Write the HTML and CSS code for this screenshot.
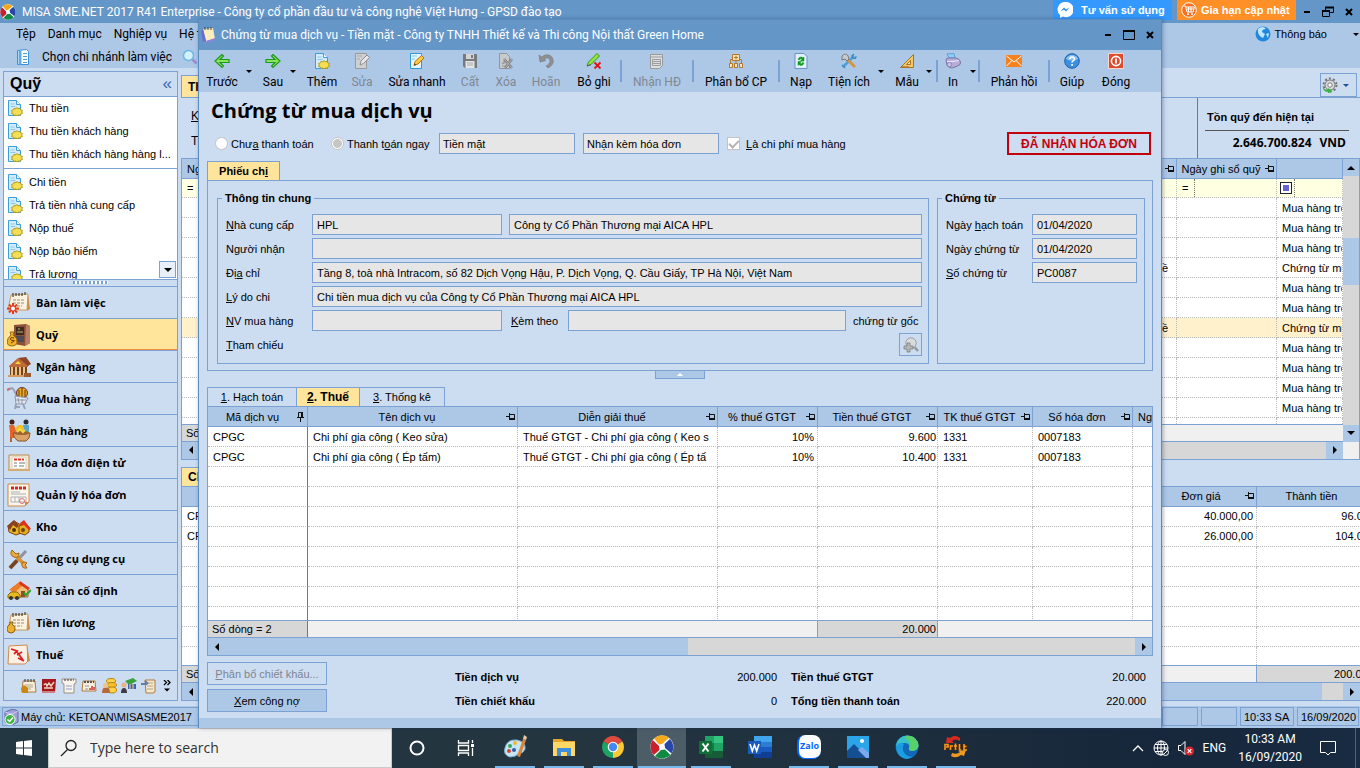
FILE: index.html
```html
<!DOCTYPE html>
<html lang="vi">
<head>
<meta charset="utf-8">
<title>MISA SME.NET 2017</title>
<link rel="stylesheet" href="styles.css">
</head>
<body>
<svg class="defs" aria-hidden="true">
  <symbol id="misa" viewBox="0 0 24 24"><circle cx="12" cy="12" r="11.500" fill="#fff"/><path d="M4 3.500A11.500 11.500 0 0 1 19 2.800L12 9 9 9.500z" fill="#f5a81c"/><path d="M20 4A11.500 11.500 0 0 1 21.500 18.500L15 13 14.500 9z" fill="#2747a8"/><path d="M20.500 20A11.500 11.500 0 0 1 5 21L11 15l4-.5z" fill="#108a43"/><path d="M3.800 20A11.500 11.500 0 0 1 2.800 5L9 11l.5 4z" fill="#c8202c"/></symbol>
  <symbol id="pagenew" viewBox="0 0 16 16"><path d="M1.500.5h8l4 4v11h-12z" fill="#d3ebfb" stroke="#3a9fdc"/><path d="M9.500.5v4h4" fill="#fff" stroke="#3a9fdc"/><path d="M3.500 4h4M3.500 6.500h5" stroke="#8cc8ec"/><path d="M10 7.500l1 1.300 2-.5.5 1.500 2 .7-.8 1.500.8 1.500-2 .6-.5 1.300-2-.4-1 1-1-1-2 .4-.5-1.300-2-.6.8-1.500-.8-1.500 2-.7.5-1.500 2 .5z" fill="#f4df52" stroke="#b39c20"/></symbol>
  <symbol id="left" viewBox="0 0 16 16"><path d="M8 1.500L1 8l7 6.500 1.500-1.500-3.500-3.500h9v-3H6L9.500 3z" fill="#8ee35c" stroke="#1c9a1c" stroke-width="1.200"/></symbol>
  <symbol id="right" viewBox="0 0 16 16"><path d="M8 1.500L15 8l-7 6.500L6.500 13 10 9.500H1v-3h9L6.500 3z" fill="#8ee35c" stroke="#1c9a1c" stroke-width="1.200"/></symbol>
  <symbol id="editgray" viewBox="0 0 16 16"><path d="M1.500.5h11v15h-11z" fill="#cfd0d2" stroke="#97999c"/><path d="M3 3h5M3 6h3" stroke="#aaa"/><path d="M6 12l1-4 6-6 2.500 2.500-6 6z" fill="#e7e7e7" stroke="#8d8f92"/></symbol>
  <symbol id="edit" viewBox="0 0 16 16"><path d="M1.500.5h11v15h-11z" fill="#e7f6ff" stroke="#2f97d8"/><path d="M3 3h5M3 6h3" stroke="#7fc3ec"/><path d="M5 12.500l1-4 6.500-6L15 5l-6 6z" fill="#ffc93f" stroke="#b8741d"/><path d="M5 12.500l.6-2 1.500 1.300z" fill="#333"/></symbol>
  <symbol id="save" viewBox="0 0 16 16"><path d="M1 1h14v14H3l-2-2z" fill="#77797c"/><path d="M4 1h8v5H4z" fill="#d4d5d6"/><path d="M9 2h2v3H9z" fill="#77797c"/><path d="M3.500 8h9v7h-9z" fill="#e3e4e5"/><path d="M5 10h6M5 12h6" stroke="#aaa"/></symbol>
  <symbol id="delgray" viewBox="0 0 16 16"><path d="M1.500.5h7l3 3v12h-10z" fill="#c9cacc" stroke="#939598"/><path d="M4 11l3-4 2 2zM4 13h4" stroke="#999" fill="#aaa"/><path d="M6 6l8 9M14 6l-7 9" stroke="#808285" stroke-width="2.500"/><path d="M6 6l8 9M14 6l-7 9" stroke="#bbb" stroke-width=".8"/></symbol>
  <symbol id="undo" viewBox="0 0 16 16"><path d="M1 2l1 7 6-1.500L6 6c3-2 6-1 6 2 0 2-2 4-4 5l2 2c4-2 6-5 5-8.500C14 1.500 8 0 3.800 4z" fill="#8d8f93" stroke="#77797c" stroke-width=".6"/></symbol>
  <symbol id="unpost" viewBox="0 0 16 16"><path d="M1 13l1.500-4 8.500-8.500 2.500 2.500-8.500 8.500z" fill="#8ee33e" stroke="#3f9a18"/><path d="M1 13l4-1.500" stroke="#555"/><path d="M8.500 9.500l6 6M14.500 9.500l-6 6" stroke="#e01515" stroke-width="1.800"/></symbol>
  <symbol id="formgray" viewBox="0 0 16 16"><path d="M1.500 1.500h12v11l-3 3h-9z" fill="#dedede" stroke="#999"/><path d="M1.500 4h12M3.500 6.500h8v6h-8zM3.500 8.500h8M3.500 10.500h8" stroke="#9a9c9f" fill="none"/></symbol>
  <symbol id="org" viewBox="0 0 16 16"><g fill="#fbe5b8" stroke="#b5792b"><path d="M4.500 1.500h7v6h-7z"/><path d="M1.500 10.500h3v4h-3zM6.500 10.500h3v4h-3zM11.500 10.500h3v4h-3z"/><path d="M8 2.500v4M6 4.500h4M8 7.500v3M2.500 10.500V6.500h2M13.500 10.500V6.500h-2" fill="none"/></g></symbol>
  <symbol id="reload" viewBox="0 0 16 16"><path d="M2 .5h9l3 3v12H2z" fill="#e1f1fd" stroke="#6b8fca"/><path d="M5 6.500c1-3 4-3 5-1.500l1-1v4H7.500L9 6.500C8 5.500 7 5.500 6.500 7zM11 10c-1 3-4 3-5 1.500l-1 1v-4h3.500L7 10c1 1 2 1 2.500-.5z" fill="#0f9a1a" stroke="#0f9a1a" stroke-width=".5"/></symbol>
  <symbol id="tools" viewBox="0 0 16 16"><path d="M2 14L13 3" stroke="#4ba0d8" stroke-width="2.500"/><path d="M13 1l-2 2 1 2 2 .5L15.500 3.500M1 12l3 3" stroke="#3d8cc4" stroke-width="1.500" fill="none"/><path d="M6 6l8 8" stroke="#d5943f" stroke-width="3"/><path d="M1 4c0-3 5-4 6-1l1 3-2 2-2-2-3 1z" fill="#c6cace" stroke="#666" stroke-width=".8"/></symbol>
  <symbol id="square" viewBox="0 0 16 16"><path d="M1.500 14.500l13-13v13z" fill="#f5c566" stroke="#a9761d"/><path d="M7.500 11.500l4-4v4z" fill="#cfdff3" stroke="#a9761d"/><path d="M3 14v-1M5 14v-1M7 14v-1M9 14v-1" stroke="#8a5b10"/></symbol>
  <symbol id="printer" viewBox="0 0 16 16"><path d="M4 5l-2-4 7-.5L10 5z" fill="#8fd0f8" stroke="#5b9fd5"/><path d="M1 7q0-2 3-2h7q4 1 4.500 4t-3 4L7 15q-3 0-5-2.500z" fill="#b6aed9" stroke="#7a74a9"/><path d="M2 8.500h6l6-1" stroke="#efeaff" fill="none"/><circle cx="4.500" cy="11.500" r="2.200" fill="#c9c3e6" stroke="#8c86bb"/></symbol>
  <symbol id="mail" viewBox="0 0 16 16"><path d="M0 2h16v12H0z" fill="#f58220"/><path d="M.5 3L8 9l7.500-6M.5 13L6 7.500M15.500 13L10 7.500" stroke="#fff" fill="none"/></symbol>
  <symbol id="help" viewBox="0 0 16 16"><circle cx="8" cy="8" r="7.300" fill="#3d8fe0" stroke="#1f5fa8"/><path d="M2 6a6.500 6.500 0 0 1 12 0q-6 3-12 0" fill="#8cc2f3"/><path d="M5.700 6.200q.2-2.300 2.400-2.300t2.300 2q0 1.200-1.200 1.900T8 9.500" stroke="#fff" stroke-width="1.500" fill="none"/><path d="M7.200 11h1.700v1.700H7.200z" fill="#fff"/></symbol>
  <symbol id="power" viewBox="0 0 16 16"><path d="M.5.500h15v15H.5z" fill="#dd4a2c" stroke="#f9d7cf"/><circle cx="8" cy="8" r="4.600" fill="none" stroke="#fff" stroke-width="1.600"/><path d="M8 5.500v5" stroke="#fff" stroke-width="1.800"/></symbol>
  <symbol id="zoomplus" viewBox="0 0 16 16"><circle cx="8" cy="6" r="5.200" fill="#d9dadb" stroke="#a0a2a5"/><path d="M11.500 10l3.500 4" stroke="#97999c" stroke-width="2.500"/><path d="M4 6h3v3h3v3H7v3H4v-3H1V9h3z" fill="#b3b5b7" stroke="#7f8184" stroke-width=".8"/></symbol>
  <symbol id="pin" viewBox="0 0 10 8"><path d="M0 3.500h3M3.500 0v7M4 1.500h4.500v4M4 5.500h5M4 6.500h5" fill="none" stroke="#111"/></symbol>
  <symbol id="pinv" viewBox="0 0 8 10"><path d="M3.500 6v4M0 5.500h7M1.500 5V.5h4M5.500 0v5M4.500 0v5" fill="none" stroke="#111"/></symbol>
  <symbol id="note" viewBox="0 0 24 24"><path d="M4 4l17-1-1 16H1z" fill="#fbf3df" stroke="#c69a60"/><path d="M21 3l2 15-3 2z" fill="#c98f4e"/><path d="M6 2v4M9 2v3M12 2v3M15 2v3M18 1v3" stroke="#444" stroke-width="1.200"/><path d="M6 9h11M6 12h11M6 15h9" stroke="#989188" stroke-width="1.200" stroke-dasharray="3 1"/></symbol>
  <symbol id="doccal" viewBox="0 0 16 16"><path d="M2 3h12l1 11H1z" fill="#f6eedd" stroke="#b07a3c"/><path d="M4 1v3M7 1v3M10 1v3M13 1v3" stroke="#333"/><path d="M4 7h8M4 9h8M4 11h6" stroke="#b5a583"/></symbol>
</svg>

<div class="app">
  <header class="titlebar">
    <svg class="i16"><use href="#misa"/></svg>
    <h1 class="apptitle">MISA SME.NET 2017 R41 Enterprise - Công ty cổ phần đầu tư và công nghệ Việt Hưng - GPSD đào tạo</h1>
    <button class="promo blue"><svg class="i16" viewBox="0 0 16 16"><path d="M8 0a7.500 7.500 0 0 0-5 13v3l3-1.500A7.600 7.600 0 1 0 8 0z" fill="#fff"/><path d="M3.500 9.500l3.500-4 2 2 3.500-2-3.500 4-2-2z" fill="#1e88f5"/></svg>Tư vấn sử dụng</button>
    <button class="promo orange"><svg class="i16" viewBox="0 0 16 16"><circle cx="8" cy="8" r="7.300" fill="#f7701f" stroke="#fff"/><path d="M2.500 4h2l1.500 6h6l1.500-5H5M6 7h7M7.500 5v5M10 5v5" stroke="#fff" fill="none"/><circle cx="7" cy="12" r="1" fill="#fff"/><circle cx="11" cy="12" r="1" fill="#fff"/></svg>Gia hạn cập nhật</button>
    <div class="winctl main">
      <button aria-label="Thu nhỏ"><svg viewBox="0 0 12 12"><path d="M3 6h6" stroke="#000" stroke-width="2"/></svg></button>
      <button aria-label="Khôi phục"><svg viewBox="0 0 12 12"><path d="M3.500 4V1.500h8v5H8M.5 4.500h7v6h-7z" fill="none" stroke="#000"/><path d="M3 1.500h9M0 5h8" stroke="#000" stroke-width="2"/></svg></button>
      <button aria-label="Đóng ứng dụng"><svg viewBox="0 0 12 12"><path d="M3 3l6 6M9 3l-6 6" stroke="#000" stroke-width="2"/></svg></button>
    </div>
  </header>
  <div class="menus">
    <nav class="menubar"><a href="#tep">Tệp</a><a href="#danhmuc">Danh mục</a><a href="#nghiepvu">Nghiệp vụ</a><a href="#hethong">Hệ t</a></nav>
    <div class="branch"><svg class="i16" viewBox="0 0 16 16"><path d="M1.500 1.500l9-1 2 2v13h-11z" fill="#fff" stroke="#3a93d6"/><path d="M2.500 1.500h3v14h-3z" fill="#59aee8"/><path d="M7 4.500h4M7 7.500h4M7 10.500h4M7 13.500h4" stroke="#4a9cd8"/></svg><button>Chọn chi nhánh làm việc</button><svg class="i16" viewBox="0 0 16 16"><circle cx="6.500" cy="6.500" r="5" fill="#d4f1ff" stroke="#68b7e6" stroke-width="1.500"/><path d="M10.500 10.500l4 4" stroke="#9a8fd0" stroke-width="3"/></svg></div>
    <button class="notice"><svg class="i16" viewBox="0 0 16 16"><circle cx="8" cy="8" r="7.500" fill="#2288de"/><path d="M3 3q5-4 8 0-4 0-4 3l3 2-2 4Q2 9 3 3zM11 8l3-1-1 5z" fill="#bfe6fb"/></svg>Thông báo</button>
    <span class="caret down"></span>
  </div>

  <div class="workspace">
    <aside class="sidebar">
      <div class="sidehead"><h2>Quỹ</h2><button aria-label="Thu gọn">«</button></div>
      <div class="links">
        <a href="#1"><svg class="i16"><use href="#pagenew"/></svg>Thu tiền</a>
        <a href="#2"><svg class="i16"><use href="#pagenew"/></svg>Thu tiền khách hàng</a>
        <a href="#3"><svg class="i16"><use href="#pagenew"/></svg>Thu tiền khách hàng hàng l...</a>
        <hr>
        <a href="#4"><svg class="i16"><use href="#pagenew"/></svg>Chi tiền</a>
        <a href="#5"><svg class="i16"><use href="#pagenew"/></svg>Trả tiền nhà cung cấp</a>
        <a href="#6"><svg class="i16"><use href="#pagenew"/></svg>Nộp thuế</a>
        <a href="#7"><svg class="i16"><use href="#pagenew"/></svg>Nộp bảo hiểm</a>
        <a href="#8"><svg class="i16"><use href="#pagenew"/></svg>Trả lương</a>
        <button class="more" aria-label="Cuộn xuống"><span class="caret down big"></span></button>
      </div>
      <div class="splitter"><span></span></div>
      <nav class="modules">
        <a href="#m1"><svg class="i24"><use href="#note"/><g stroke="#e23b1c" stroke-width="2"><path d="M6 12v11M0 17.500h12M2 13.500l8 8M10 13.500l-8 8"/></g><circle cx="6" cy="17.500" r="2" fill="#fff"/></svg>Bàn làm việc</a>
        <a href="#m2" class="on"><svg class="i24" viewBox="0 0 24 24"><path d="M7 2l12-1 4 2v17l-5 3-11-2z" fill="#8b5138"/><path d="M19 1l4 2v17l-5 3z" fill="#b98064"/><path d="M9 4h8v8H9z" fill="#3c2a25"/><path d="M9 13h8v6H9z" fill="#4f4a55"/><path d="M10 9h6M11 6h2" stroke="#c7b46a"/><path d="M3 9h4l-1 3q5 3 4 8-1 3-5 3t-5-3q0-5 4-8z" fill="#eeb128" stroke="#9c6a12"/><path d="M7 15q-4-1-3.500 1t3 1.500T4 20" stroke="#6d2f0c" fill="none"/></svg>Quỹ</a>
        <a href="#m3"><svg class="i24" viewBox="0 0 24 24"><path d="M2 11L11 3l10 7v2H2z" fill="#c06a34"/><path d="M11 3l8-1 5 7-3 2z" fill="#8e4525"/><path d="M3 12h17v8H3z" fill="#6f4125"/><path d="M5 12v8M9 12v8M13 12v8M17 12v8" stroke="#eec27d" stroke-width="2"/><path d="M1 20h20v2H1z" fill="#d89a5c"/><path d="M8 9l3-3 3 3z" fill="#f6d443"/><path d="M17 18h7v4h-7z" fill="#9d5a2e"/></svg>Ngân hàng</a>
        <a href="#m4"><svg class="i24" viewBox="0 0 24 24"><path d="M0 3l5-2 2 2 3 7" stroke="#9aa4b8" stroke-width="2" fill="none"/><path d="M0 3l3-1.500" stroke="#d07060" stroke-width="2"/><circle cx="15" cy="6" r="5.500" fill="#f2ab1f" stroke="#633"/><path d="M12 3v7M15 1v10M18 3v7" stroke="#5b3a12"/><path d="M8 9l13 2-3 6H9z" fill="#e3e7ef" stroke="#8d97ac"/><path d="M11 11l1 5M15 12v5M9 13h10" stroke="#8d97ac"/><path d="M9 17l-1 5M16 17l2 5M8 20h5" stroke="#98a3b8" stroke-width="2"/></svg>Mua hàng</a>
        <a href="#m5"><svg class="i24" viewBox="0 0 24 24"><circle cx="5" cy="3" r="2.500" fill="#432018"/><path d="M2 6h5l2 6-2 3v4H3V13z" fill="#e6642a"/><path d="M4 18v5" stroke="#b9632f" stroke-width="2"/><circle cx="19" cy="3" r="2.500" fill="#2b2b35"/><path d="M16 6h6v8h-6z" fill="#5aa6c8"/><circle cx="13" cy="10" r="4" fill="#edbf28"/><path d="M6 14h17q0 6-4 8h-8q-4-2-5-8z" fill="#dca368" stroke="#8c5527"/><ellipse cx="14.500" cy="14" rx="8" ry="2" fill="#9f6531"/><path d="M10 13l3-3 3 3 2-2" stroke="#f7d843" stroke-width="2" fill="none"/></svg>Bán hàng</a>
        <a href="#m6"><svg class="i24" viewBox="0 0 24 24"><path d="M2 4h20v15H2z" fill="#f4ead3" stroke="#b98c4e"/><path d="M5 6h14v12H5z" fill="#fff" stroke="#ddd0b3"/><path d="M7 8.500h10" stroke="#d32" stroke-width="2" stroke-dasharray="3 1"/><path d="M7 12h3M12 12h6M7 15h3M12 15h5" stroke="#777"/><path d="M1 18h22v2H1z" fill="#d5ab6f"/></svg>Hóa đơn điện tử</a>
        <a href="#m7"><svg class="i24" viewBox="0 0 24 24"><path d="M1 1h21v18l-4 4H1z" fill="#fdf6ea" stroke="#c98d49"/><path d="M4 5h15" stroke="#e02222" stroke-width="3" stroke-dasharray="3 1"/><path d="M4 9h9M4 11h15M4 14h15v5H4zM8 14v5M12 14v5" stroke="#aab0ba" fill="none"/><circle cx="15" cy="18" r="2.500" fill="none" stroke="#df6b7c"/><path d="M18 23v-4h4z" fill="#d38c45"/></svg>Quản lý hóa đơn</a>
        <a href="#m8"><svg class="i24" viewBox="0 0 24 24"><path d="M1 11l6-5 7 4v8l-5 2-7-3z" fill="#edb41f" stroke="#784211"/><path d="M0 11l7-6 5 5-2 3-4-3-3 5z" fill="#8a4220"/><path d="M12 11l6-3 4 4v5l-4 3-6-2z" fill="#e6ab25" stroke="#784211"/><path d="M13 8l4-3 7 9-2 1-5-5-3 1z" fill="#d9331c"/><circle cx="7" cy="15" r="2" fill="#52300e"/><circle cx="16" cy="15" r="2" fill="#704510"/></svg>Kho</a>
        <a href="#m9"><svg class="i24" viewBox="0 0 24 24"><path d="M3 21L19 4" stroke="#8d939e" stroke-width="3"/><path d="M3 21L10 13.500" stroke="#754422" stroke-width="4"/><path d="M7 7l11 11" stroke="#d9902f" stroke-width="3.500"/><path d="M5 3q-3 5 2 7t5-4L9 7 7 5zM15 16q-1 6 5 5l-2-3 2-2q-3-2-5 0z" fill="#efab3a" stroke="#9d641d"/></svg>Công cụ dụng cụ</a>
        <a href="#m10"><svg class="i24" viewBox="0 0 24 24"><path d="M5 9l8-5 8 5v9H7z" fill="#f1bd73" stroke="#a96527"/><path d="M2 11L12 3l4 3-8 7z" fill="#ee7c28"/><path d="M13 2l10 7-2 2-9-6z" fill="#d9371f"/><path d="M14 12h4v6h-4z" fill="#89512a"/><path d="M1 16l3-3h6l3 3v3H1z" fill="#e9ba1e" stroke="#8c680c"/><circle cx="4" cy="19" r="2" fill="#333"/><circle cx="10" cy="19" r="2" fill="#333"/><path d="M17 14l2 2 5-5" stroke="#2ba233" stroke-width="2" fill="none"/></svg>Tài sản cố định</a>
        <a href="#m11"><svg class="i24"><use href="#note"/><path d="M3 11h3l-1 2q4 3 3 6t-4 3-4-3 3-6z" fill="#eeb128" stroke="#8c5b0c"/></svg>Tiền lương</a>
        <a href="#m12"><svg class="i24" viewBox="0 0 24 24"><path d="M2 3l18-1 1 16-3 3H1z" fill="#fbf0e4" stroke="#d08a50"/><path d="M20 2l3 16-3 1z" fill="#c98f4e"/><path d="M4 6l6 2-3 3M10 9l6 8M15 9l-5 3M11 15l6 3" stroke="#d92323" stroke-width="1.800" fill="none"/></svg>Thuế</a>
      </nav>
      <div class="quick">
        <button aria-label="Giá thành"><svg class="i16"><use href="#doccal"/><path d="M0 10l3-3 4 3v5H1z" fill="#c98a15"/></svg></button>
        <button aria-label="Sổ"><svg class="i16" viewBox="0 0 16 16"><path d="M1 1h14l-1 14H1z" fill="#a5181d"/><path d="M3 7q2-3 3 1l2-3 2 3 3-4M3 10h9" stroke="#f1d6c4" fill="none" stroke-width="1.500"/><path d="M1 14h13" stroke="#eee"/></svg></button>
        <button aria-label="Hợp đồng"><svg class="i16" viewBox="0 0 16 16"><path d="M1 1h14v4l-2 1v9H3V6L1 5z" fill="#f8f4ec" stroke="#998f80"/><path d="M3 2h10" stroke="#333" stroke-dasharray="2 1"/><path d="M5 8h6M5 11h6" stroke="#8ea0c8"/></svg></button>
        <button aria-label="Ngân sách"><svg class="i16" viewBox="0 0 16 16"><path d="M2 3h12l1 10H1z" fill="#f6eedd" stroke="#b07a3c"/><path d="M3 4h10" stroke="#555" stroke-width="2" stroke-dasharray="2 1"/><path d="M4 8h4M4 11h3" stroke="#999"/><path d="M9 12v-2M11 12V8M13 12V9" stroke="#c33" stroke-width="1.500"/></svg></button>
        <button aria-label="Cổ đông"><svg class="i16" viewBox="0 0 16 16"><ellipse cx="10" cy="3" rx="4.500" ry="2.500" fill="#ffd348" stroke="#b98512"/><ellipse cx="11" cy="7" rx="4.500" ry="2.500" fill="#f6bd2d" stroke="#b98512"/><ellipse cx="11" cy="12" rx="4.500" ry="3" fill="#ffd348" stroke="#b98512"/><path d="M1 15q0-6 4-6t4 6z" fill="#b66a3a"/><circle cx="4.500" cy="7.500" r="2.500" fill="#eec28e"/></svg></button>
        <button aria-label="Thủ quỹ"><svg class="i16" viewBox="0 0 16 16"><path d="M4 3l8-3 4 3-8 4z" fill="#38a23c"/><path d="M7 6h8v5H7z" fill="#3c63b8"/><path d="M9 6v5M12 6v5" stroke="#ffe37a"/><path d="M0 15q0-5 3-5t3 5z" fill="#3d3d48"/><circle cx="3" cy="7" r="2.500" fill="#e7b284"/></svg></button>
        <button aria-label="Tổng hợp"><svg class="i16" viewBox="0 0 16 16"><path d="M4 2h10v12l-2 1H5z" fill="#f3e7cf" stroke="#b07a3c"/><path d="M6 5h6M6 8h6M6 11h6" stroke="#b5a583"/><path d="M0 6h6M4 3l3 3" stroke="#667aa8" stroke-width="2"/></svg></button>
        <button aria-label="Thêm phân hệ" class="chev"><svg viewBox="0 0 8 12"><path d="M1 0l2.500 2.500L1 5M4.500 0L7 2.500 4.500 5" stroke="#000" stroke-width="1.300" fill="none"/><path d="M1 8.500h6l-3 3z"/></svg></button>
      </div>
    </aside>

    <main class="content">
      <div class="tabline"><button class="tab on">Thu</button><span class="grow"></span><button class="gear" aria-label="Tùy chọn"><svg class="i16" viewBox="0 0 16 16"><circle cx="8" cy="8" r="5" fill="#d8dadc" stroke="#777" stroke-width="1"/><circle cx="8" cy="8" r="6.500" fill="none" stroke="#777" stroke-width="2" stroke-dasharray="2.100 2"/><circle cx="8" cy="8" r="2.200" fill="#fff" stroke="#777"/><path d="M1 8q0 5 5 5v-2l4 3-4 2.500V15Q0 15 1 8z" fill="#38b53c"/></svg><span class="caret down"></span></button></div>
      <div class="filters">
        <div class="crit"><p><u>K</u></p><p>T</p></div>
        <div class="balance"><p>Tồn quỹ đến hiện tại</p><p class="sum"><span>2.646.700.824</span><span>VND</span></p></div>
      </div>
      <section class="grid g1">
        <div class="gridmain">
          <div class="clip">
          <table>
            <colgroup><col><col class="w100"><col class="w66"></colgroup>
            <thead><tr><th><span class="th l">Ng<svg class="pin"><use href="#pin"/></svg></span></th><th><span class="th">Ngày ghi sổ quỹ<svg class="pin"><use href="#pin"/></svg></span></th><th></th></tr></thead>
            <tbody>
              <tr class="filter"><td>=</td><td>=<i></i></td><td><b class="chk"></b><i></i></td></tr>
              <tr><td></td><td></td><td>Mua hàng trong</td></tr>
              <tr><td></td><td></td><td>Mua hàng trong</td></tr>
              <tr><td></td><td></td><td>Mua hàng trong</td></tr>
              <tr><td class="r">ề</td><td></td><td>Chứng từ mua</td></tr>
              <tr><td></td><td></td><td>Mua hàng trong</td></tr>
              <tr><td></td><td></td><td>Mua hàng trong</td></tr>
              <tr class="sel"><td class="r">ề</td><td></td><td>Chứng từ mua</td></tr>
              <tr><td></td><td></td><td>Mua hàng trong</td></tr>
              <tr><td></td><td></td><td>Mua hàng trong</td></tr>
              <tr><td></td><td></td><td>Mua hàng trong</td></tr>
              <tr><td></td><td></td><td>Mua hàng trong</td></tr>
              <tr><td></td><td></td><td>Mua hàng trong</td></tr>
            </tbody>
          </table>
          </div>
          <div class="gfoot"><span class="count">Số</span></div>
          <div class="hscroll"><button aria-label="Cuộn trái"><span class="caret left"></span></button><span class="grow"></span><button aria-label="Cuộn phải"><span class="caret right"></span></button></div>
        </div>
        <div class="vscroll"><button aria-label="Cuộn lên"><span class="caret up big"></span></button><span class="t1"></span><span class="thumb"></span><span class="t2"></span><button aria-label="Cuộn xuống"><span class="caret down big"></span></button><span class="corner"></span></div>
      </section>
      <div class="tabline low"><button class="tab on">Chi</button></div>
      <section class="grid g2">
        <div class="gridmain">
          <div class="clip">
          <table class="over">
            <colgroup><col><col class="w100"><col class="w122"></colgroup>
            <thead><tr><th></th><th><span class="th">Đơn giá<svg class="pin"><use href="#pin"/></svg></span></th><th><span class="th wide">Thành tiền</span></th></tr></thead>
            <tbody>
              <tr><td>CP</td><td class="n">40.000,00</td><td class="n">96.000</td></tr>
              <tr><td>CP</td><td class="n">26.000,00</td><td class="n">104.000</td></tr>
              <tr><td></td><td></td><td></td></tr><tr><td></td><td></td><td></td></tr><tr><td></td><td></td><td></td></tr><tr><td></td><td></td><td></td></tr><tr><td></td><td></td><td></td></tr><tr><td></td><td></td><td></td></tr>
            </tbody>
          </table>
          </div>
          <div class="gfoot"><span class="count">Số</span><span class="total">200.000</span></div>
          <div class="hscroll"><button aria-label="Cuộn trái"><span class="caret left"></span></button><span class="bar"></span><span class="grow"></span><button aria-label="Cuộn phải"><span class="caret right"></span></button></div>
        </div>
      </section>
    </main>
  </div>
  <footer class="status"><span class="server"><svg class="i16" viewBox="0 0 16 16"><path d="M1 3l8-3 5 2v11l-6 3-7-3z" fill="#9da1d8" stroke="#6568a5"/><path d="M1 3l7 2v11M8 5l6-3" stroke="#c9cbf0" fill="none"/><circle cx="6" cy="10.500" r="5" fill="#3fb341" stroke="#fff"/><path d="M3.500 10.500l2 2 3.500-4" stroke="#fff" stroke-width="1.500" fill="none"/></svg>Máy chủ: KETOAN\MISASME2017</span><span class="s36"></span><span class="s36"></span><span class="s54">10:33 SA</span><span class="s62">16/09/2020</span></footer>

  <section class="dialog" role="dialog" aria-label="Chứng từ mua dịch vụ">
    <header class="dtitle">
      <svg class="i16" viewBox="0 0 16 16"><path d="M3 2l10-1 2 11-9 2z" fill="#fbeebc"/><path d="M1 4l2-2 3 12-3 1z" fill="#6d6bd0"/><path d="M3 15l12-4v2l-9 3z" fill="#8a87dd"/><path d="M5 0v3M8 0v3M11 0v3" stroke="#444"/></svg>
      <h2>Chứng từ mua dịch vụ - Tiền mặt - Công ty TNHH Thiết kế và Thi công Nội thất Green Home</h2>
      <div class="winctl">
        <button aria-label="Thu nhỏ hộp thoại"><svg viewBox="0 0 12 12"><path d="M3 6h6" stroke="#000" stroke-width="2"/></svg></button>
        <button aria-label="Phóng to"><svg viewBox="0 0 12 12"><path d="M.5 1.500h11v9H.5z" fill="none" stroke="#000"/><path d="M0 2h12" stroke="#000" stroke-width="2"/></svg></button>
        <button aria-label="Đóng hộp thoại"><svg viewBox="0 0 12 12"><path d="M3 3l6 6M9 3l-6 6" stroke="#000" stroke-width="2"/></svg></button>
      </div>
    </header>
    <div class="toolbar">
      <button><svg class="i16"><use href="#left"/></svg>Trước</button><span class="caret down"></span>
      <button><svg class="i16"><use href="#right"/></svg>Sau</button><span class="caret down"></span>
      <button><svg class="i16"><use href="#pagenew"/></svg>Thêm</button>
      <button disabled><svg class="i16"><use href="#editgray"/></svg>Sửa</button>
      <button><svg class="i16"><use href="#edit"/></svg>Sửa nhanh</button>
      <button disabled><svg class="i16"><use href="#save"/></svg>Cất</button>
      <button disabled><svg class="i16"><use href="#delgray"/></svg>Xóa</button>
      <button disabled><svg class="i16"><use href="#undo"/></svg>Hoãn</button>
      <button><svg class="i16"><use href="#unpost"/></svg>Bỏ ghi</button><span class="sep"></span>
      <button disabled><svg class="i16"><use href="#formgray"/></svg>Nhận HĐ</button><span class="sep"></span>
      <button><svg class="i16"><use href="#org"/></svg>Phân bổ CP</button><span class="sep"></span>
      <button><svg class="i16"><use href="#reload"/></svg>Nạp</button>
      <button><svg class="i16"><use href="#tools"/></svg>Tiện ích</button><span class="caret down"></span>
      <button><svg class="i16"><use href="#square"/></svg>Mẫu</button><span class="caret down"></span><span class="sep"></span>
      <button><svg class="i16"><use href="#printer"/></svg>In</button><span class="caret down"></span><span class="sep"></span>
      <button><svg class="i16"><use href="#mail"/></svg>Phản hồi</button><span class="sep"></span>
      <button><svg class="i16"><use href="#help"/></svg>Giúp</button>
      <button><svg class="i16"><use href="#power"/></svg>Đóng</button>
    </div>
    <div class="dbody">
      <h3>Chứng từ mua dịch vụ</h3>
      <div class="options">
        <label class="opt first"><input type="radio" name="pay"><span>Chư<u>a</u> thanh toán</span></label>
        <label class="opt second"><input type="radio" name="pay" checked><span>Thanh t<u>o</u>án ngay</span></label>
        <input class="field w136" aria-label="Hình thức" value="Tiền mặt" readonly>
        <input class="field w136" aria-label="Hóa đơn" value="Nhận kèm hóa đơn" readonly>
        <label class="opt"><input type="checkbox" checked><span><u>L</u>à chi phí mua hàng</span></label>
        <strong class="stamp">ĐÃ NHẬN HÓA ĐƠN</strong>
      </div>
      <div class="ptabs"><button class="ptab">Phiếu ch<u>i</u></button></div>
      <div class="panel">
        <fieldset class="general"><legend>Thông tin chung</legend>
          <div class="row"><label for="ncc"><u>N</u>hà cung cấp</label><input id="ncc" class="field w190" value="HPL" readonly><input class="field grow" aria-label="Tên nhà cung cấp" value="Công ty Cổ Phần Thương mại AICA HPL" readonly></div>
          <div class="row"><label for="nn">N<u>g</u>ười nhận</label><input id="nn" class="field grow" readonly></div>
          <div class="row"><label for="dc">Đị<u>a</u> chỉ</label><input id="dc" class="field grow" value="Tầng 8, toà nhà Intracom, số 82 Dịch Vọng Hậu, P. Dịch Vọng, Q. Cầu Giấy, TP Hà Nội, Việt Nam" readonly></div>
          <div class="row"><label for="ld"><u>L</u>ý do chi</label><input id="ld" class="field grow" value="Chi tiền mua dịch vụ của Công ty Cổ Phần Thương mại AICA HPL" readonly></div>
          <div class="row"><label for="nv"><u>N</u>V mua hàng</label><input id="nv" class="field w190" readonly><label class="kt" for="kt"><u>K</u>èm theo</label><input id="kt" class="field grow" readonly><span class="tail">chứng từ gốc</span></div>
          <div class="row"><label for="tc"><u>T</u>ham chiếu</label><span class="grow"></span><button id="tc" class="ref"><svg class="i16"><use href="#zoomplus"/></svg></button></div>
        </fieldset>
        <fieldset class="voucher"><legend>Chứng từ</legend>
          <div class="row"><label for="nh">Ngày <u>h</u>ạch toán</label><input id="nh" class="field grow" value="01/04/2020" readonly></div>
          <div class="row"><label for="nc">Ngày <u>c</u>hứng từ</label><input id="nc" class="field grow" value="01/04/2020" readonly></div>
          <div class="row"><label for="sc"><u>S</u>ố chứng từ</label><input id="sc" class="field grow" value="PC0087" readonly></div>
        </fieldset>
      </div>
      <button class="fold" aria-label="Thu gọn thông tin"><span class="caret up"></span></button>
      <div class="dtabs"><button class="dt1"><u>1</u>. Hạch toán</button><button class="dt2 on"><u>2</u>. Thuế</button><button class="dt3"><u>3</u>. Thống kê</button></div>
      <section class="grid lines">
        <div class="gridmain">
          <div class="clip">
          <table>
            <colgroup><col class="w100"><col class="w210"><col class="w200"><col class="w100"><col class="w120"><col class="w95"><col class="w100"><col></colgroup>
            <thead><tr><th><span class="th">Mã dịch vụ<svg class="pinv"><use href="#pinv"/></svg></span></th><th><span class="th">Tên dịch vụ<svg class="pin"><use href="#pin"/></svg></span></th><th><span class="th">Diễn giải thuế<svg class="pin"><use href="#pin"/></svg></span></th><th><span class="th">% thuế GTGT<svg class="pin"><use href="#pin"/></svg></span></th><th><span class="th">Tiền thuế GTGT<svg class="pin"><use href="#pin"/></svg></span></th><th><span class="th">TK thuế GTGT<svg class="pin"><use href="#pin"/></svg></span></th><th><span class="th">Số hóa đơn<svg class="pin"><use href="#pin"/></svg></span></th><th><span class="th l">Ng</span></th></tr></thead>
            <tbody>
              <tr><td>CPGC</td><td>Chi phí gia công ( Keo sửa)</td><td>Thuế GTGT - Chi phí gia công ( Keo s</td><td class="n">10%</td><td class="n t">9.600</td><td>1331</td><td>0007183</td><td></td></tr>
              <tr><td>CPGC</td><td>Chi phí gia công ( Ép tấm)</td><td>Thuế GTGT - Chi phí gia công ( Ép tấ</td><td class="n">10%</td><td class="n t">10.400</td><td>1331</td><td>0007183</td><td></td></tr>
              <tr><td></td><td></td><td></td><td></td><td></td><td></td><td></td><td></td></tr>
              <tr><td></td><td></td><td></td><td></td><td></td><td></td><td></td><td></td></tr>
              <tr><td></td><td></td><td></td><td></td><td></td><td></td><td></td><td></td></tr>
              <tr><td></td><td></td><td></td><td></td><td></td><td></td><td></td><td></td></tr>
              <tr><td></td><td></td><td></td><td></td><td></td><td></td><td></td><td></td></tr>
              <tr><td></td><td></td><td></td><td></td><td></td><td></td><td></td><td></td></tr>
              <tr><td></td><td></td><td></td><td></td><td></td><td></td><td></td><td></td></tr>
              <tr><td></td><td></td><td></td><td></td><td></td><td></td><td></td><td></td></tr>
            </tbody>
          </table>
          </div>
          <div class="gfoot"><span class="count">Số dòng = 2</span><span class="space"></span><span class="total">20.000</span></div>
          <div class="hscroll"><button aria-label="Cuộn trái"><span class="caret left"></span></button><span class="bar"></span><span class="grow"></span><button aria-label="Cuộn phải"><span class="caret right"></span></button></div>
        </div>
      </section>
      <div class="bottom">
        <div class="actions"><button disabled><u>P</u>hân bổ chiết khấu...</button><button><u>X</u>em công nợ</button></div>
        <dl class="totals">
          <div><dt>Tiền dịch vụ</dt><dd>200.000</dd></div><div><dt>Tiền thuế GTGT</dt><dd>20.000</dd></div>
          <div><dt>Tiền chiết khấu</dt><dd>0</dd></div><div><dt>Tổng tiền thanh toán</dt><dd>220.000</dd></div>
        </dl>
      </div>
    </div>
  </section>
</div>

<footer class="taskbar">
  <button class="start" aria-label="Start"><svg class="i16" viewBox="0 0 16 16"><path d="M0 2l7-1v6.500H0zM8 1l8-1v7.500H8zM0 8.500h7V15l-7-1zM8 8.500h8V16l-8-1z" fill="#fff"/></svg></button>
  <label class="search"><svg class="i18" viewBox="0 0 18 18"><circle cx="11" cy="6.500" r="5" fill="none" stroke="#222" stroke-width="1.300"/><path d="M7.500 10.500L1 17" stroke="#222" stroke-width="1.300"/></svg><input placeholder="Type here to search" aria-label="Type here to search"></label>
  <div class="apps">
    <button aria-label="Cortana"><svg class="i18" viewBox="0 0 18 18"><circle cx="9" cy="9" r="6.500" fill="none" stroke="#fff" stroke-width="2"/></svg></button>
    <button aria-label="Task view"><svg class="i18" viewBox="0 0 18 18"><path d="M1.500 1v3h10V1M1.500 17v-3h10v3M1.500 6.500h10v5h-10z" fill="none" stroke="#fff" stroke-width="1.300"/><path d="M15.500 1v3M15.500 9v8" stroke="#fff" stroke-width="1.300"/><path d="M14 5h3v3h-3z" fill="#fff"/></svg></button>
    <button class="run" aria-label="Paint"><svg class="i24" viewBox="0 0 24 24"><path d="M2 13Q4 4 14 5q9 2 8 9-2 5-6 4-3 4-9 4-7-2-5-9z" fill="#c7e6f5" stroke="#7fb4d2"/><circle cx="7" cy="11" r="2" fill="#3aa657"/><circle cx="12" cy="8" r="2" fill="#f2b632"/><circle cx="6" cy="16" r="2" fill="#d8432f"/><circle cx="11" cy="15" r="2" fill="#2a5fae"/><path d="M14 21l6-17 3 1-6 17z" fill="#d98436"/><path d="M20 4l1-4 3 2-1 3z" fill="#e9c9a0"/></svg></button>
    <button class="run" aria-label="File Explorer"><svg class="i24" viewBox="0 0 24 24"><path d="M1 4h9l2 2h11v15H1z" fill="#e6a62a"/><path d="M1 7h22v14H1z" fill="#ffd766"/><path d="M5 21v-8h14v8h-4v-4H9v4z" fill="#3c8fdd"/></svg></button>
    <button class="run" aria-label="Chrome"><svg class="i24" viewBox="0 0 24 24"><path d="M12 12L2.500 6.500A11 11 0 0 1 21.500 6.500z" fill="#dd4b3e"/><path d="M12 12l9.500-5.500A11 11 0 0 1 12 23z" fill="#fcc934"/><path d="M12 12v11A11 11 0 0 1 2.500 6.500z" fill="#1ea362"/><circle cx="12" cy="12" r="5.300" fill="#fff"/><circle cx="12" cy="12" r="4.200" fill="#4688f1"/></svg></button>
    <button class="run active" aria-label="MISA"><svg class="i24"><use href="#misa"/></svg></button>
    <button class="run" aria-label="Excel"><svg class="i24" viewBox="0 0 24 24"><path d="M6 1h18v22H6z" fill="#21a366"/><path d="M15 1h9v7h-9z" fill="#33c481"/><path d="M6 8h9v8H6z" fill="#107c41"/><path d="M6 16h18v7H6z" fill="#185c37"/><path d="M0 6h13v13H0z" fill="#0f7038"/><path d="M3.500 8.500l6 8M9.500 8.500l-6 8" stroke="#fff" stroke-width="2"/></svg></button>
    <button class="plain" aria-label="Word"><svg class="i24" viewBox="0 0 24 24"><path d="M6 1h18v22H6z" fill="#2b7cd3"/><path d="M6 1h18v6H6z" fill="#41a5ee"/><path d="M6 12h18v6H6z" fill="#185abd"/><path d="M6 17h18v6H6z" fill="#103f91"/><path d="M0 6h13v13H0z" fill="#185abd"/><path d="M2 9l2.300 7L6.500 10l2.200 6L11 9" stroke="#fff" stroke-width="1.600" fill="none"/></svg></button>
    <button class="run zalo" aria-label="Zalo"><span>Zalo</span></button>
    <button class="run" aria-label="Photos"><svg class="i24" viewBox="0 0 24 24"><path d="M1 1h22v22H1z" fill="#2aa5ea"/><path d="M1 16l7-7 14 14H1z" fill="#144f94"/><path d="M12 15l4-3 7 6v5h-3z" fill="#7ea8ec"/><circle cx="16" cy="6" r="2" fill="#fff"/></svg></button>
    <button class="run" aria-label="Edge"><svg class="i24" viewBox="0 0 24 24"><circle cx="12" cy="12" r="11.500" fill="#1268b8"/><path d="M1 10Q3 1 12 .5 23 1 23.500 11q-1 5-7 5-4-1-2-4 0-4-5-4-6 0-8 4z" fill="#36c0c8"/><path d="M12 .5Q23 1 23.500 11q-1 5-7 5-4-1-2-4 2-6-5-9z" fill="#58d06b"/><path d="M1 11q4-5 8-2-3 5 1 10 4 4 9 2-8 6-14 0-4-4-4-10z" fill="#1b9de2"/></svg></button>
    <button class="run" aria-label="ProtEdit"><svg class="i24" viewBox="0 0 24 24"><path d="M2 8l1-6 3 1q5-4 10 0v3q-5-3-8 0l2 2z" fill="#da291c"/><path d="M22 15l-2 6-3-1q-5 4-10 1l1-3q5 2 8-1l-2-1z" fill="#ee9a22"/><path d="M0 9.500h24v5H0z" fill="#40240a"/><path d="M1 15V9.500h3v2.500H2M6.500 15v-4h2.500M11.500 8.500V15M10 11h3M15.500 9v6h2M20 9v6h3M20 11.500h2.500" stroke="#f59a1e" stroke-width="1.600" fill="none"/></svg></button>
  </div>
  <div class="tray">
    <svg class="i12" viewBox="0 0 12 12"><path d="M1 9l5-5 5 5" fill="none" stroke="#fff" stroke-width="1.300"/></svg>
    <svg class="i16" viewBox="0 0 16 16"><g fill="none" stroke="#fff"><circle cx="8" cy="8" r="7"/><ellipse cx="8" cy="8" rx="3.500" ry="7"/><path d="M1 8h14M2 4.500h12M2 11.500h8M8 1v14"/></g><circle cx="12.500" cy="12.500" r="3" fill="#1a2a3e" stroke="#fff"/><path d="M10.500 14.500l4-4" stroke="#fff"/></svg>
    <svg class="i16" viewBox="0 0 16 16"><path d="M.5 5.500h2.500l4-4v13l-4-4H.5z" fill="none" stroke="#fff"/><circle cx="11.500" cy="11" r="4.500" fill="#d9262c"/><path d="M9.700 9.200l3.600 3.600M13.300 9.200l-3.600 3.600" stroke="#fff" stroke-width="1.200"/></svg>
    <span>ENG</span>
    <span class="clock">10:33 AM<br>16/09/2020</span>
    <svg class="i16" viewBox="0 0 16 16"><path d="M.5 1.500h15v11h-5L8 15l-2.500-2.500h-5z" fill="none" stroke="#fff"/></svg>
    <i class="peek"></i>
  </div>
</footer>
</body>
</html>
```
FILE: styles.css
```css
* { box-sizing: border-box; }
:root {
  --title: #6496c8; --bar: #adc7e7; --bg: #ccdcf1; --line: #7ba2d2;
  --tab: #ffe59c; --field: #e6e6e6; --gray: #d7d7d7; --light: #f0f0f0; --dot: #b9b9b9;
  --ui: Roboto, "Open Sans", sans-serif;
}
body { margin: 0; height: 100vh; display: flex; flex-direction: column; overflow: hidden; background: var(--bg); color: #000; font: 11px/14px "Liberation Sans", Arial, sans-serif; }
button, input { font: inherit; color: inherit; margin: 0; }
button { padding: 0; border: 0; background: none; }
a { color: inherit; text-decoration: none; }
h1, h2, h3, p, dl, dd { margin: 0; }
svg { display: block; flex: none; }
.defs { position: absolute; width: 0; height: 0; }
.i12 { width: 12px; height: 12px; }
.i16 { width: 16px; height: 16px; }
.i18 { width: 18px; height: 18px; }
.i24 { width: 24px; height: 24px; }
.grow { flex: 1; min-width: 0; }

.caret { display: block; width: 0; height: 0; flex: none; border: 0 solid transparent; }
.caret.down { border-width: 3px 3px 0; border-top-color: #000; }
.caret.up { border-width: 0 3px 3px; border-bottom-color: #000; }
.caret.left { border-width: 4px 4px 4px 0; border-right-color: #000; }
.caret.right { border-width: 4px 0 4px 4px; border-left-color: #000; }
.caret.down.big { border-width: 4px 4px 0; }
.caret.up.big { border-width: 0 4px 4px; }

/* main window */
.app { position: relative; flex: 1; min-height: 0; display: flex; flex-direction: column; }
.titlebar { height: 23px; flex: none; display: flex; align-items: center; background: var(--title); }
.titlebar > .i16 { margin-right: 6px; }
.apptitle { flex: 1; min-width: 0; font: 12px/22px var(--ui); color: #fff; white-space: nowrap; }
.promo { display: flex; align-items: center; height: 20px; padding: 0 4px; color: #fff; font-weight: bold; font-size: 11px; line-height: 18px; white-space: nowrap; align-self: flex-start; }
.promo svg { margin-right: 8px; }
.promo.blue { width: 119px; background: #3399ff; margin-right: 5px; }
.promo.orange { width: 119px; background: #ff9027; }
.promo.orange svg { margin-right: 4px; }
.winctl { display: flex; gap: 9px; padding-right: 5px; }
.winctl svg { width: 12px; height: 12px; }
.winctl.main { padding-left: 5px; }
.menus { height: 45px; flex: none; display: flex; flex-wrap: wrap; align-items: center; background: var(--bar); padding-left: 16px; font: 12px/16px var(--ui); }
.menubar { display: flex; gap: 12px; flex: 1; }
.branch { order: 4; width: 100%; display: flex; align-items: center; gap: 10px; }
.notice { display: flex; align-items: center; gap: 3px; font: 11px/16px "Liberation Sans", Arial, sans-serif; margin-right: 26px; }
.menus > .caret { margin-right: 1px; }
.workspace { flex: 1; min-height: 0; display: flex; padding: 0 0 5px 3px; }

/* sidebar */
.sidebar { width: 175px; flex: none; margin: 3px 3px 0 0; border: 1px solid var(--line); display: flex; flex-direction: column; }
.sidehead { height: 25px; display: flex; align-items: center; justify-content: space-between; padding: 0 5px 0 6px; border-bottom: 1px solid var(--line); }
.sidehead h2 { font-size: 16px; line-height: 24px; }
.sidehead button { font-size: 17px; line-height: 20px; color: #3a68ac; }
.links { position: relative; flex: 1; min-height: 0; overflow: hidden; background: #fff; }
.links a { display: flex; align-items: center; gap: 6px; height: 23px; padding: 0 0 1px 3px; white-space: nowrap; font-size: 11px; }
.links hr { margin: 2px 0; border: 0; border-top: 1px solid var(--line); }
.more { position: absolute; right: 1px; bottom: 1px; width: 17px; height: 17px; border: 1px solid var(--line); background: #e9f0fa; display: flex; align-items: center; justify-content: center; }
.splitter { height: 7px; flex: none; border-top: 1px solid var(--line); display: flex; justify-content: center; }
.splitter span { width: 35px; height: 3px; margin-top: 1px; background: repeating-linear-gradient(90deg, #7ba2d2 0 2px, #fff 2px 4px); }
.modules a { height: 32px; display: flex; align-items: center; gap: 5px; padding-left: 3px; border-top: 1px solid var(--line); font: bold 11px/16px "Open Sans", sans-serif; }
.modules .on { background: linear-gradient(#ee9040, #ee9040) bottom / 100% 1px no-repeat, var(--tab); }
.quick { height: 30px; flex: none; display: flex; align-items: center; gap: 4px; padding-left: 17px; border-top: 1px solid var(--line); }
.quick .chev { margin-left: 2px; }
.chev svg { width: 8px; height: 12px; }

/* content behind the dialog */
.content { flex: 1; min-width: 0; display: flex; flex-direction: column; }
.tabline { display: flex; height: 30px; flex: none; align-items: flex-end; border-bottom: 1px solid var(--line); }
.tabline.low { height: 26px; border: 0; }
.tab { height: 22px; padding: 0 6px; background: var(--tab); border: 1px solid var(--line); border-bottom: 0; font-weight: bold; font-size: 12px; }
.low .tab { height: 19px; }
.gear { width: 37px; height: 24px; margin-right: 3px; border: 1px solid var(--line); display: flex; align-items: center; justify-content: space-between; padding: 0 7px 0 1px; }
.gear .caret { border-top-color: #1d4f96; }
.filters { height: 60px; flex: none; display: flex; justify-content: space-between; }
.crit { padding: 6px 0 0 10px; line-height: 25px; font-size: 12px; }
.balance { width: 163px; border-left: 1px solid #777; padding: 12px 11px 0 7px; font-weight: bold; white-space: nowrap; }
.balance p { margin-left: 2px; line-height: 14px; padding-bottom: 6px; }
.balance .sum { margin: 0; border-top: 1px solid #555; display: flex; justify-content: flex-end; gap: 8px; padding: 5px 3px 0; font: bold 12px/14px "Open Sans", sans-serif; }

/* grids */
.grid { display: flex; min-height: 0; border: 1px solid var(--line); border-right: 0; }
.g1 { flex: 302 0 0; }
.g2 { flex: 215 0 0; }
.gridmain { flex: 1; min-width: 0; display: flex; flex-direction: column; }
.clip { flex: 1; min-height: 0; overflow: hidden; background: #fff; }
table { width: 100%; table-layout: fixed; border-collapse: separate; border-spacing: 0; }
table.over { width: calc(100% + 19px); }
.w66 { width: 66px; } .w95 { width: 95px; } .w100 { width: 100px; } .w120 { width: 120px; } .w122 { width: 122px; } .w200 { width: 200px; } .w210 { width: 210px; }
th { height: 20px; padding: 0; background: var(--bar); border-right: 1px solid var(--line); border-bottom: 1px solid var(--line); font-weight: normal; overflow: hidden; white-space: nowrap; }
.th { display: flex; align-items: center; justify-content: space-between; padding: 0 1px 0 0; }
.th::before { content: ""; }
.th.l { padding-left: 5px; }
.th.l::before { display: none; }
.th.wide { padding-right: 12px; }
.th.wide::after { content: ""; }
.pin { width: 10px; height: 8px; }
.pinv { width: 8px; height: 10px; margin-right: 1px; }
td { height: 20px; padding: 0 5px; border-right: 1px dotted var(--dot); border-bottom: 1px dotted var(--dot); overflow: hidden; white-space: nowrap; }
td.n { text-align: right; padding-right: 3px; }
td.t { padding-right: 1px; }
td.r { text-align: right; padding-right: 8px; }
.g1 .filter td { background: #ffffe1; position: relative; height: 19px; }
.filter i { position: absolute; left: 17px; top: 0; bottom: 0; border-left: 1px dotted #777; }
.chk { display: block; width: 12px; height: 12px; margin-left: -2px; border: 1px solid #223; background: #6464d0; box-shadow: inset 0 0 0 2px #fff; }
.sel td { background: #fff1cc; }
.gfoot { height: 18px; flex: none; display: flex; background: var(--light); border-top: 1px solid var(--line); border-bottom: 1px solid var(--line); line-height: 16px; }
.gfoot .count { width: 100px; background: var(--gray); padding-left: 4px; }
.gfoot .total { background: var(--gray); border: 0 solid var(--line); border-width: 0 1px; text-align: right; padding-right: 1px; }
.g2 .gfoot .total { width: 104px; margin-left: auto; padding: 0 0 0 77px; text-align: left; overflow: hidden; border-right: 0; }
.hscroll { height: 17px; flex: none; display: flex; background: var(--gray); }
.hscroll button { width: 17px; display: flex; align-items: center; justify-content: center; background: var(--bar); }
.g2 .bar { width: calc(100% - 55px); background: var(--bar); }
.vscroll { width: 17px; flex: none; display: flex; flex-direction: column; background: var(--gray); border-right: 1px solid var(--line); }
.vscroll button { height: 17px; flex: none; display: flex; align-items: center; justify-content: center; background: var(--bar); }
.vscroll .t1 { flex: 62; }
.vscroll .thumb { flex: 47; background: var(--bar); }
.vscroll .t2 { flex: 140; }
.vscroll .corner { height: 17px; flex: none; background: var(--light); }
.status { height: 22px; flex: none; display: flex; align-items: stretch; gap: 3px; padding: 1px 1px 2px 2px; background: var(--bar); line-height: 18px; white-space: nowrap; }
.status span { border: 1px solid var(--line); padding-left: 3px; }
.status .server { flex: 1; display: flex; gap: 1px; align-items: center; padding-left: 1px; }
.s36 { width: 36px; } .s54 { width: 54px; } .s62 { width: 62px; }

/* dialog */
.dialog { position: absolute; left: 198px; right: 198px; top: 19px; bottom: 0; display: flex; flex-direction: column; background: var(--bg); border: 1px solid #5b8cc0; border-bottom: 0; box-shadow: 1px 0 4px rgba(30, 50, 90, .4); }
.dtitle { height: 30px; flex: none; display: flex; align-items: center; gap: 5px; padding-left: 1px; background: var(--title); }
.dtitle h2 { flex: 1; font: 12px/28px var(--ui); color: #fff; white-space: nowrap; }
.toolbar { height: 42px; flex: none; display: grid; justify-content: start; align-items: center; background: var(--bar); padding-left: 1px; font: 12px/16px var(--ui);
  grid-template-columns: 44px 14px 30px 14px 40px 40px 70px 36px 36px 44px 52px 2px 70px 2px 84px 2px 42px 54px 14px 34px 12px 2px 30px 10px 2px 68px 2px 44px 44px; }
.toolbar button { display: flex; flex-direction: column; align-items: center; gap: 5px; white-space: nowrap; }
.toolbar button:disabled { color: #7f8791; }
.toolbar .caret { margin-left: 2px; }
.sep { height: 22px; width: 2px; background: var(--line); }
.dbody { flex: 1; min-height: 0; display: flex; flex-direction: column; padding: 0 8px 0 8px; border-bottom: 10px solid var(--bar); }
.dbody h3 { font: bold 20px/28px "Open Sans", sans-serif; padding: 5px 0 0 4px; }
.options { display: flex; align-items: center; height: 23px; margin-top: 7px; padding: 0 2px 0 8px; gap: 8px; }
.opt { display: flex; align-items: center; gap: 3px; white-space: nowrap; line-height: 16px; }
.opt.first { width: 108px; }
.opt.second { width: 100px; }
.opt input { appearance: none; flex: none; width: 13px; height: 13px; background: #fff; border: 1px solid #c3c3c3; }
.opt input[type=radio] { border-radius: 50%; }
.opt input[type=radio]:checked { background: radial-gradient(circle, #c6c6c6 0 4px, #fff 5px); }
.opt input[type=checkbox] { display: grid; place-items: center; margin-right: 3px; }
.opt input[type=checkbox]::after { content: ""; width: 4px; height: 8px; margin-bottom: 2px; border: solid #b4b4b4; border-width: 0 2px 2px 0; transform: rotate(45deg); }
.field { height: 21px; min-width: 0; padding: 0 4px; border: 1px solid var(--line); border-radius: 0; background: var(--field); }
.w136 { width: 136px; }
.w190 { width: 190px; }
.options .field { padding: 0 3px; }
.stamp { margin-left: auto; width: 144px; height: 23px; border: 2px solid #c4000c; color: #c4000c; font-size: 12px; line-height: 20px; text-align: center; white-space: nowrap; }
.ptabs { display: flex; margin-top: 6px; }
.ptab { width: 73px; height: 19px; background: var(--tab); border: 1px solid var(--line); border-bottom: 0; font-weight: bold; }
.panel { display: flex; gap: 8px; border: 1px solid var(--line); padding: 11px 7px 6px 9px; }
fieldset { margin: 0; min-width: 0; border: 1px solid var(--line); padding: 10px 6px 8px 8px; display: flex; flex-direction: column; gap: 3px; }
legend { padding: 0 3px; margin-left: -4px; line-height: 12px; font-weight: bold; }
.general { flex: 1; }
.voucher { width: 208px; padding-right: 7px; }
.row { display: flex; align-items: center; height: 21px; white-space: nowrap; }
.row label { width: 86px; flex: none; }
.row .w190 { flex: none; margin-right: 7px; }
.row .kt { width: 59px; padding-left: 2px; }
.tail { width: 76px; padding-left: 7px; }
.ref { width: 23px; height: 23px; border: 1px solid var(--line); display: flex; align-items: center; justify-content: center; }
.fold { align-self: center; width: 50px; height: 8px; background: var(--bar); border: 1px solid var(--line); border-top: 0; display: flex; align-items: center; justify-content: center; }
.fold .caret { border-bottom-color: #fff; }
.dtabs { display: flex; margin-top: 8px; }
.dtabs button { height: 19px; border: 1px solid var(--line); border-width: 1px 1px 0 0; }
.dtabs .dt1 { width: 90px; border-left-width: 1px; }
.dtabs .dt2 { width: 63px; background: var(--tab); font-weight: bold; font-size: 12px; }
.dt3 { width: 85px; }
.lines { flex: 1; border-right: 1px solid var(--line); }
.lines th:last-child, .lines td:last-child { border-right: 0; }
.lines td:first-child { border-right: 1px solid #777; }
.lines .gfoot .count { width: 99px; }
.lines .space { width: 510px; border-left: 1px solid #777; }
.lines .total { width: 121px; }
.lines .bar { width: 463px; background: var(--bar); }
.bottom { display: flex; flex: none; height: 62px; padding-top: 6px; }
.actions { display: flex; flex-direction: column; gap: 4px; width: 120px; }
.actions button { height: 23px; border: 1px solid var(--line); background: var(--bar); white-space: nowrap; }
.actions button:disabled { background: none; color: #7c8592; }
.totals { flex: 1; display: grid; grid-template-columns: 322px 1fr; column-gap: 14px; grid-auto-rows: 24px; padding: 3px 7px 0 128px; }
.totals div { display: flex; justify-content: space-between; line-height: 24px; white-space: nowrap; }
.totals dt { font-weight: bold; }

/* Windows taskbar */
.taskbar { height: 40px; flex: none; display: flex; color: #fff; background: linear-gradient(90deg, #223741, #243540 45%, #17273b 85%, #182b42); font: 12px/18px var(--ui); }
.start { width: 48px; display: flex; align-items: center; justify-content: center; }
.search { width: 344px; display: flex; align-items: center; gap: 10px; padding-left: 11px; background: #f2f2f2; border: 1px solid #c9c9c9; }
.search input { flex: 1; min-width: 0; border: 0; background: none; font: 14px/20px "Open Sans", sans-serif; color: #222; outline: 0; }
.search input::placeholder { color: #333; opacity: 1; }
.apps { display: flex; flex: 1; }
.apps button { width: 49px; display: flex; align-items: center; justify-content: center; }
.apps .run { border-bottom: 2px solid transparent; background: linear-gradient(#76b9ed, #76b9ed) center bottom / 40px 2px no-repeat border-box; }
.apps .plain { border-bottom: 2px solid transparent; }
.apps .active { background: linear-gradient(#76b9ed, #76b9ed) center bottom / 48px 2px no-repeat border-box, #4d5d68 border-box; }
.zalo span { width: 24px; height: 24px; border-radius: 8px; background: #fff; border-bottom: 1px solid #0068ff; border-left: 2px solid #0068ff; color: #0068ff; font: bold 9px/22px "Open Sans", sans-serif; text-align: center; }
.tray { display: flex; align-items: center; }
.tray > * { margin-left: 9px; }
.tray .clock { text-align: center; margin-left: 12px; }
.tray .clock + svg { margin-left: 18px; }
.tray .peek { width: 1px; height: 40px; background: #56636f; margin: 0 4px 0 19px; }
```
